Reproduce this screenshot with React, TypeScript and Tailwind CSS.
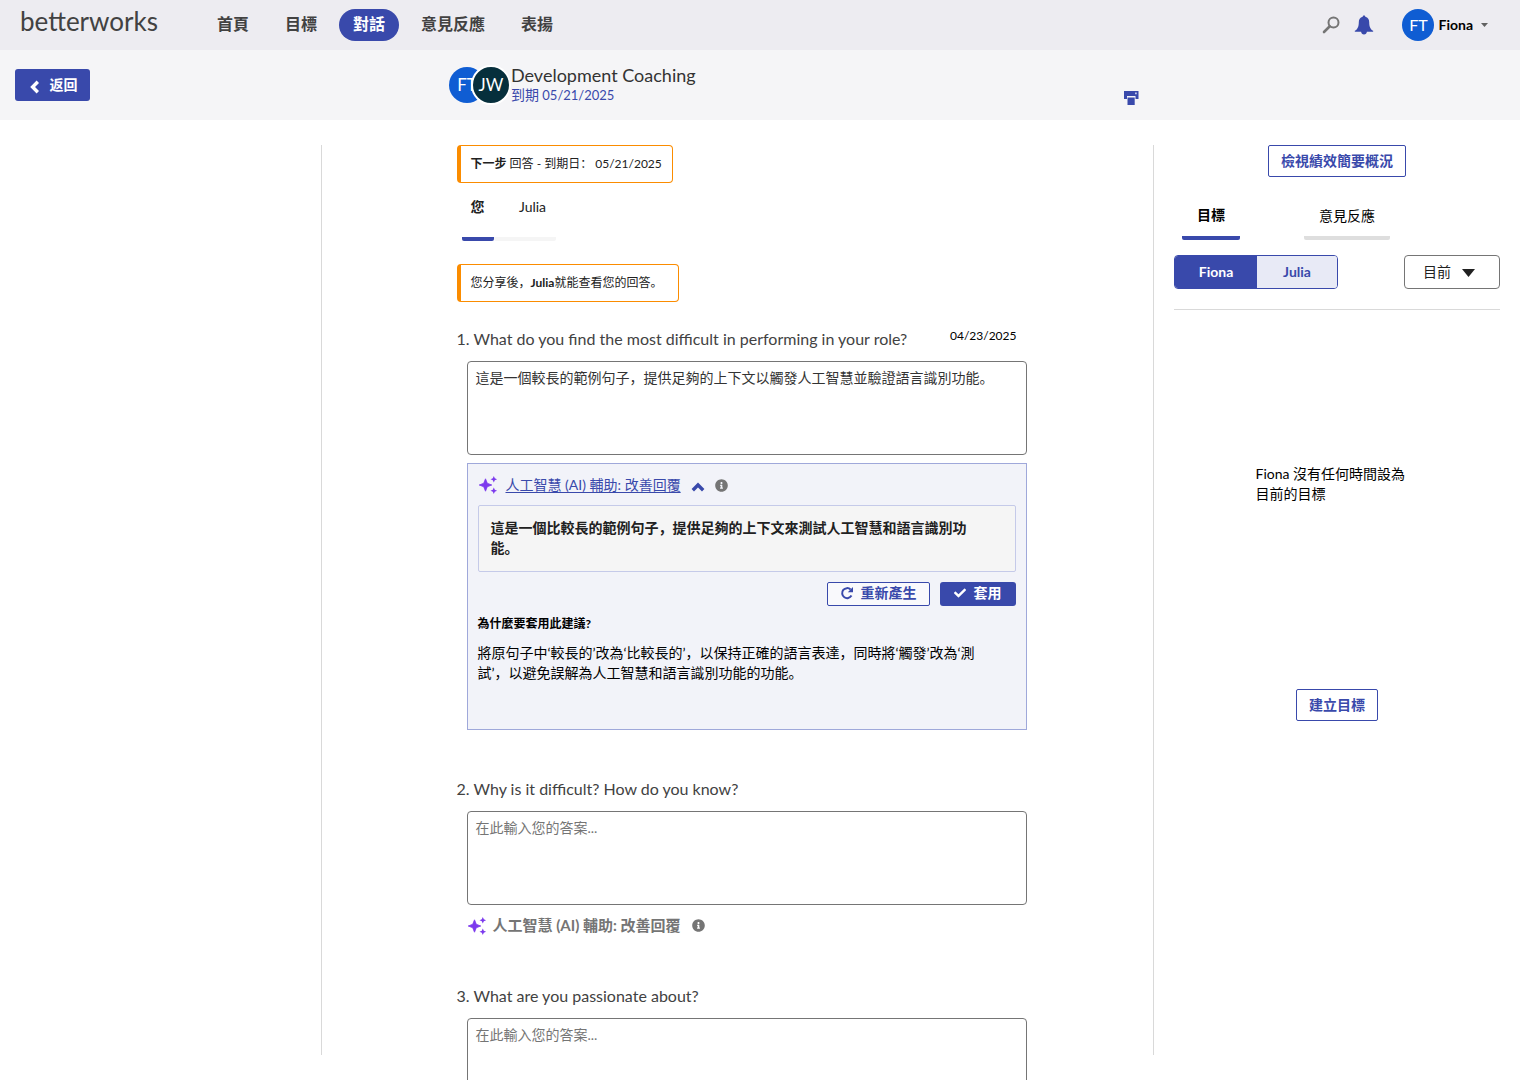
import { useState } from "react";
import type { ReactNode } from "react";
import { FaCheck, FaInfoCircle } from "react-icons/fa";

const NAV = ["首頁", "目標", "對話", "意見反應", "表揚"];

function Sparkles() {
  return (
    <svg viewBox="0 0 20 20" className="size-5 shrink-0 fill-[#7c3aed]" aria-hidden="true">
      <path d="M7.500 3.800 9.300 8.300 13.800 10 9.300 11.700 7.500 16.200 5.700 11.700 1.200 10 5.700 8.300Z" stroke="#7c3aed" strokeWidth="0.8" strokeLinejoin="round" />
      <path d="M15.800 1 16.800 3.300 19.100 4.300 16.800 5.300 15.800 7.600 14.800 5.300 12.500 4.300 14.800 3.300Z" />
      <path d="M15.800 12.400 16.800 14.700 19.100 15.700 16.800 16.700 15.800 19 14.800 16.700 12.500 15.700 14.800 14.700Z" />
    </svg>
  );
}

function Chevron({ up }: { up?: boolean }) {
  return (
    <svg viewBox="0 0 14 14" className="mt-1 size-3.5 fill-none stroke-current" strokeWidth="3.4" aria-hidden="true">
      <path d={up ? "M1.800 10.200 7 5l5.200 5.200" : "M9.800 1.800 4.600 7l5.200 5.200"} />
    </svg>
  );
}

function Refresh() {
  return (
    <svg viewBox="0 0 14 14" className="size-3.5 fill-none stroke-current" aria-hidden="true">
      <path d="M11.500 9.600A5 5 0 1 1 10.600 3.500" strokeWidth="2" />
      <path d="M13 1v5.200H7.800Z" fill="currentColor" stroke="none" />
    </svg>
  );
}

function Callout({ children }: { children: ReactNode }) {
  return (
    <p className="flex h-[38px] w-fit items-center rounded border border-l-4 border-[#fb8c00] px-2.5 text-xs whitespace-pre text-[#212121]">
      {children}
    </p>
  );
}

function Question({ id, label, date, value, children }: { id: string; label: string; date?: string; value?: string; children?: ReactNode }) {
  return (
    <section className="mb-12">
      <div className="mb-[11px] flex items-start justify-between pr-2.5">
        <label htmlFor={id} className="text-base leading-[22px] text-[#424242]">{label}</label>
        {date && <time className="text-xs leading-4 text-black">{date}</time>}
      </div>
      <div className="pl-2.5">
        <textarea
          id={id}
          defaultValue={value}
          placeholder="在此輸入您的答案..."
          className="block h-[94px] w-full resize-none rounded border border-[#757575] px-2 py-1.5 text-sm leading-5 text-[#333] placeholder:text-[#757575]"
        />
        {children}
      </div>
    </section>
  );
}

function Header() {
  return (
    <header className="flex h-[50px] shrink-0 items-center bg-[#edecf1] pr-8 pl-5">
      <a href="#home" className="w-[183px] pb-2 text-[26px] leading-8 text-[#424242] font-['Lato',sans-serif]">betterworks</a>
      <nav className="flex gap-2">
        {NAV.map((item) => (
          <a
            key={item}
            href={"#" + item}
            className={
              item === "對話"
                ? "flex h-8 items-center rounded-full bg-[#3949ab] px-3.5 pb-0.5 text-base font-bold text-white"
                : "flex h-8 items-center px-3.5 pb-0.5 text-base font-bold text-[#424242]"
            }
          >
            {item}
          </a>
        ))}
      </nav>
      <div className="ml-auto flex items-center">
        <button aria-label="搜尋">
          <svg viewBox="0 0 18 18" className="size-[18px] fill-none stroke-[#757575]" aria-hidden="true">
            <circle cx="11.500" cy="6.500" r="5" strokeWidth="2" />
            <path d="M7.800 10.300 2 16" strokeWidth="2.600" strokeLinecap="round" />
          </svg>
        </button>
        <button aria-label="通知" className="ml-3.5">
          <svg viewBox="0 0 20 20" className="size-5 fill-[#3949ab]" aria-hidden="true">
            <path d="M10 0.600c0.800 0 1.300 0.500 1.300 1.200C14 2.400 15.200 4.600 15.200 7.200c0 4.600 1.200 6.800 3.900 8.600 0.300 0.400 0.100 1-0.400 1H12.900c-0.100 1.600-1.300 2.800-2.900 2.800s-2.800-1.200-2.900-2.800H1.300c-0.500 0-0.700-0.600-0.400-1 2.700-1.800 3.900-4 3.900-8.600C4.800 4.600 6 2.400 8.700 1.800c0-0.700 0.500-1.200 1.300-1.200Z" />
          </svg>
        </button>
        <button className="ml-7 flex items-center text-sm font-bold text-black">
          <span className="mr-1 grid size-8 place-items-center rounded-full bg-[#0f5dd3] text-base font-normal text-white">FT</span>
          Fiona
          <svg viewBox="0 0 7 4" className="ml-2 h-1 w-[7px] fill-[#616161]" aria-hidden="true"><path d="M0 0h7L3.500 4Z" /></svg>
        </button>
      </div>
    </header>
  );
}

function TitleBar() {
  return (
    <div className="grid h-[70px] shrink-0 grid-cols-[434px_minmax(0,1fr)_380px] items-center bg-[#f5f5f7] pl-[15px]">
      <button className="flex h-8 w-[75px] items-center justify-center gap-2 rounded-[3px] bg-[#3949ab] text-sm font-bold text-white">
        <Chevron />
        返回
      </button>
      <div className="flex items-center">
        <span className="grid size-9 shrink-0 place-items-center rounded-full bg-[#0f5dd3] text-[17px] text-white">FT</span>
        <span className="relative -ml-3.5 grid size-10 shrink-0 place-items-center rounded-full border-2 border-white bg-[#062f3c] text-[17px] text-white">JW</span>
        <div>
          <h1 className="text-lg leading-5 text-[#333]">Development Coaching</h1>
          <p className="text-[13px] leading-5 text-[#3949ab]"><span className="text-sm">到期</span> 05/21/2025</p>
        </div>
      </div>
      <button aria-label="列印" className="mt-[26px] -ml-[17px] w-fit">
        <svg viewBox="0 0 16 16" className="size-4" aria-hidden="true">
          <path d="M1 1h14.500v8h-3V6H4v3H1Z" fill="#3949ab" />
          <path d="M4.500 7.500h7.200v7.500H4.500Z" fill="#3949ab" />
          <path d="M12 2.500h1.800v1.800H12Z" fill="#c5cae9" />
        </svg>
      </button>
    </div>
  );
}

function AiPanel() {
  return (
    <div className="mt-2 h-[267px] border border-[#9fa8da] bg-[#f2f3f9] px-2.5 pt-[11px]">
      <div className="flex h-5 items-center">
        <Sparkles />
        <button className="ml-2 text-sm leading-5 text-[#3949ab] underline underline-offset-2">人工智慧 (AI) 輔助: 改善回覆</button>
        <span className="ml-2.5 text-[#3949ab]"><Chevron up /></span>
        <FaInfoCircle className="ml-2.5 size-[13px] text-[#757575]" />
      </div>
      <p className="mt-2.5 h-[67px] rounded-[2px] border border-[#c5cae9] bg-[#f5f5f5] py-3 pr-7 pl-3 text-sm leading-5 font-bold text-[#212121]">
        這是一個比較長的範例句子，提供足夠的上下文來測試人工智慧和語言識別功能。
      </p>
      <div className="mt-2.5 flex justify-end gap-2.5">
        <button className="flex h-6 items-center gap-[7px] rounded-[2px] border border-[#3949ab] bg-white/50 px-3 pb-0.5 text-sm font-bold text-[#3949ab]">
          <Refresh />
          重新產生
        </button>
        <button className="flex h-6 items-center gap-2 rounded-[3px] bg-[#3949ab] px-3.5 pb-0.5 text-sm font-bold text-white">
          <FaCheck className="size-3" />
          套用
        </button>
      </div>
      <h2 className="mt-2 text-xs leading-5 font-bold text-black">為什麼要套用此建議?</h2>
      <p className="mt-[9px] pr-5 text-sm leading-5 text-black">
        將原句子中‘較長的’改為‘比較長的’，以保持正確的語言表達，同時將‘觸發’改為‘測試’，以避免誤解為人工智慧和語言識別功能的功能。
      </p>
    </div>
  );
}

function Goals() {
  const [person, setPerson] = useState("Fiona");
  return (
    <aside className="my-[25px] border-l border-[#d9d9d9] px-5">
      <div className="flex justify-center">
        <button className="h-8 rounded-[2px] border border-[#3949ab] px-3 text-sm font-bold text-[#3949ab]">檢視績效簡要概況</button>
      </div>
      <div className="mt-[15px] flex gap-16 pl-2 text-sm text-black">
        <button className="h-12 rounded-[2px] border-b-4 border-[#3949ab] px-[15px] pt-0.5 font-bold">目標</button>
        <button className="h-12 rounded-[2px] border-b-4 border-[#dedede] px-[15px] pt-1">意見反應</button>
      </div>
      <div className="mt-[15px] flex items-center justify-between border-b border-[#d9d9d9] pb-5">
        <div className="flex h-[34px] overflow-hidden rounded border border-[#3949ab]">
          {["Fiona", "Julia"].map((name) => (
            <button
              key={name}
              onClick={() => setPerson(name)}
              className={
                name === person
                  ? "w-[82px] bg-[#3949ab] text-sm font-bold text-white"
                  : "w-20 bg-[#e8eaf6] text-sm font-bold text-[#3949ab]"
              }
            >
              {name}
            </button>
          ))}
        </div>
        <div className="relative">
          <select aria-label="期間" className="h-[34px] w-24 appearance-none rounded border border-[#757575] bg-white pl-[18px] text-sm text-[#212121]">
            <option>目前</option>
          </select>
          <svg viewBox="0 0 13 8" className="pointer-events-none absolute top-3.5 right-[25px] h-2 w-[13px] fill-[#212121]" aria-hidden="true"><path d="M0 0h13L6.500 8Z" /></svg>
        </div>
      </div>
      <p className="mx-auto mt-[154px] w-[163px] text-sm leading-5 text-black">Fiona 沒有任何時間設為目前的目標</p>
      <div className="mt-[185px] flex justify-center">
        <button className="h-8 rounded-[2px] border border-[#3949ab] px-3 text-sm font-bold text-[#3949ab]">建立目標</button>
      </div>
    </aside>
  );
}

export default function App() {
  return (
    <div className="flex h-screen flex-col overflow-hidden bg-white font-['Lato','Noto_Sans_CJK_SC',sans-serif]">
      <Header />
      <TitleBar />
      <div className="grid min-h-0 flex-1 grid-cols-[322px_minmax(0,1fr)_367px]">
        <div className="my-[25px] border-r border-[#d9d9d9]" />
        <main className="overflow-y-auto pt-[25px] [scrollbar-width:none]">
          <div className="mx-auto w-full max-w-[578px] pl-2">
            <Callout><b>下一步</b> 回答 - 到期日： 05/21/2025</Callout>
            <div className="flex pl-[5px] text-sm leading-5 text-[#212121]">
              <button className="h-[58px] w-8 rounded-[2px] border-b-4 border-[#3949ab] pb-1.5 font-bold">您</button>
              <button className="h-[58px] w-[62px] rounded-[2px] border-b-4 border-[#f5f5f5] pb-1.5 pl-4">Julia</button>
            </div>
            <div className="mt-[23px] mb-[26px]">
              <Callout><span className="pr-1.5">您分享後，<b>Julia</b>就能查看您的回答。</span></Callout>
            </div>
            <Question id="q1" label="1. What do you find the most difficult in performing in your role?" date="04/23/2025" value="這是一個較長的範例句子，提供足夠的上下文以觸發人工智慧並驗證語言識別功能。">
              <AiPanel />
            </Question>
            <Question id="q2" label="2. Why is it difficult? How do you know?">
              <button className="mt-2.5 mb-[49px] flex h-[21px] items-center text-[15px] font-bold text-[#757575]">
                <Sparkles />
                <span className="mr-3 ml-1.5">人工智慧 (AI) 輔助: 改善回覆</span>
                <FaInfoCircle className="size-[13px]" />
              </button>
            </Question>
            <Question id="q3" label="3. What are you passionate about?" />
          </div>
        </main>
        <Goals />
      </div>
    </div>
  );
}
